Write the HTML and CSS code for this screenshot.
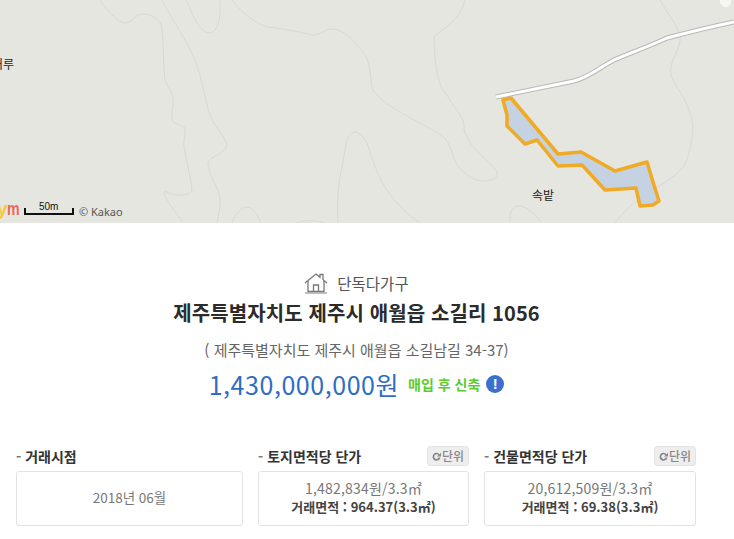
FILE: index.html
```html
<!DOCTYPE html>
<html lang="ko">
<head>
  <meta charset="UTF-8">
  <meta name="viewport" content="width=device-width, initial-scale=1.0">
  <title>실거래가 상세</title>
  <link rel="stylesheet" href="styles.css">
</head>
<body>
  <div class="map">
    <svg class="map-bg" width="734" height="223" viewBox="0 0 734 223">
      <g class="contour">
        <path d="M100 0C108 12 118 23 126 23C133 22 135 14 143 14C150 14 158 18 161 24C164 40 163 65 165 80C168 88 172 92 173 98C174 106 171 113 172 120C175 125 182 125 185 128C186 135 183 140 184 146C186 160 191 178 192 191C188 197 172 196 165 191C163 198 175 210 183 223"/>
        <path d="M162 0C172 20 187 40 195 60C202 78 205 100 210 115C215 128 224 135 227 145C225 155 210 155 208 163C208 175 218 185 220 198C221 208 218 215 217 223"/>
        <path d="M186 0C192 12 199 33 209 33C218 33 221 18 220 0"/>
        <path d="M232 0C243 14 256 24 268 27C285 29 295 31 312 35C322 35 325 29 332 29C345 29 358 45 367 58C372 75 370 85 374 92C385 105 405 115 440 134C450 140 452 155 457 165C465 175 475 182 486 181C495 180 499 176 497 172C490 160 470 150 464 130C466 118 455 110 447 95C436 85 435 60 434 38C438 30 458 25 465 0"/>
        <path d="M338 223C337 205 338 185 341 172C345 155 345 133 355 132C360 132 364 138 367 143C375 165 380 195 420 223"/>
        <path d="M232 223C235 215 241 207 247 207C253 207 258 216 261 223"/>
        <path d="M295 223C305 220 315 220 326 223"/>
        <path d="M660 0C668 15 677 25 680 35C682 50 668 60 671 75C676 90 690 100 693 128C692 145 688 160 683 167C670 185 640 190 615 223"/>
        <path d="M510 223C509 212 512 206 519 206C527 206 536 215 542 223"/>
      </g>
      <path class="road-case" d="M496 97L574 81C590 77 600 67 614 60C630 53 650 46 667 38C690 32 710 27 734 22"/>
      <path class="road" d="M496 97L574 81C590 77 600 67 614 60C630 53 650 46 667 38C690 32 710 27 734 22"/>
      <path class="lot" d="M503 100L511 98L558 154L581 152L615 171L647 162L653 182L659 201L653 205L640 206L636 188L605 190L582 165L558 166L537 140L525 144L507 126L507 115Z"/>
      <path class="marker" d="M720 0H731V3L728 7H724L720 3Z"/>
      <path class="scale" d="M25 208V214H73V208"/>
    </svg>
    <span class="map-label label-west">거루</span>
    <span class="map-label label-field">속밭</span>
    <span class="map-logo"><span class="logo-y">y</span><span class="logo-m">m</span></span>
    <span class="scale-text">50m</span>
    <span class="map-copy">© Kakao</span>
  </div>

  <div class="summary">
    <div class="kind">
      <svg class="kind-icon" width="24" height="22" viewBox="0 0 24 22">
        <path d="M1 11L12 2L16 5.300V2.500H19V7.800L23 11"/>
        <path d="M4 9V19.500H20V9M9.500 19.500V13H14.500V19.500"/>
        <path class="kind-base" d="M1 21H23"/>
      </svg>
      <span>단독다가구</span>
    </div>
    <h1>제주특별자치도 제주시 애월읍 소길리 1056</h1>
    <p class="road-addr">( 제주특별자치도 제주시 애월읍 소길남길 34-37)</p>
    <div class="price-row">
      <span class="price">1,430,000,000원</span>
      <span class="tag">매입 후 신축</span>
      <span class="info-dot">!</span>
    </div>
  </div>

  <div class="cols">
    <div class="col col-date">
      <div class="col-head"><h2>거래시점</h2></div>
      <div class="box"><span>2018년 06월</span></div>
    </div>
    <div class="col col-land">
      <div class="col-head">
        <h2>토지면적당 단가</h2>
        <button class="unit">
          <svg width="11" height="11" viewBox="0 0 11 11"><path d="M8.800 3.500A4 4 0 1 0 9.500 6.500H7.600A2.200 2.200 0 1 1 7.400 4.300L5.800 5.500H10V1.200Z"/></svg>단위
        </button>
      </div>
      <div class="box"><span>1,482,834원/3.3㎡</span><b>거래면적 : 964.37(3.3㎡)</b></div>
    </div>
    <div class="col col-build">
      <div class="col-head">
        <h2>건물면적당 단가</h2>
        <button class="unit">
          <svg width="11" height="11" viewBox="0 0 11 11"><path d="M8.800 3.500A4 4 0 1 0 9.500 6.500H7.600A2.200 2.200 0 1 1 7.400 4.300L5.800 5.500H10V1.200Z"/></svg>단위
        </button>
      </div>
      <div class="box"><span>20,612,509원/3.3㎡</span><b>거래면적 : 69.38(3.3㎡)</b></div>
    </div>
  </div>
</body>
</html>
```

FILE: styles.css
```css
html, body {
  margin: 0;
  height: 539px;
  overflow: hidden;
}
body {
  background: #fff;
  color: #333;
  font-family: "Noto Sans CJK KR", "Noto Sans", sans-serif;
}
h1, h2, p {
  margin: 0;
}

/* map */
.map {
  position: relative;
  height: 223px;
  overflow: hidden;
  background: #e6e6e1;
}
.map-bg {
  display: block;
}
.contour path {
  fill: none;
  stroke: #d9d9d4;
  stroke-width: 1;
}
.road-case {
  fill: none;
  stroke: #b9b9b4;
  stroke-width: 5;
}
.road {
  fill: none;
  stroke: #fff;
  stroke-width: 3;
}
.lot {
  fill: #c5d2e2;
  stroke: #f0aa23;
  stroke-width: 3.500;
  stroke-linejoin: round;
}
.marker {
  fill: #f6f6f3;
}
.scale {
  fill: none;
  stroke: #111;
  stroke-width: 2;
}
.map-label {
  position: absolute;
  font-size: 12px;
  line-height: 14px;
  color: #222;
}
.label-west {
  left: -8px;
  top: 57px;
}
.label-field {
  left: 532px;
  top: 188px;
}
.map-logo {
  position: absolute;
  left: -3px;
  top: 198px;
  font: bold 19px/22px "Liberation Sans", sans-serif;
}
.logo-y {
  color: #f5c842;
}
.logo-m {
  display: inline-block;
  margin-left: -1px;
  transform: scaleX(0.750);
  transform-origin: left;
  color: #ea6a5c;
}
.scale-text {
  position: absolute;
  left: 39px;
  top: 201px;
  font: 10px/12px "Liberation Sans", sans-serif;
  color: #111;
}
.map-copy {
  position: absolute;
  left: 79px;
  top: 205px;
  font: 11px/13px "Noto Sans", sans-serif;
  color: #555;
}

/* summary */
.summary {
  height: 200px;
  box-sizing: border-box;
  padding-top: 48px;
  margin-right: 21px;
  display: flex;
  flex-direction: column;
  align-items: center;
}
.kind {
  display: flex;
  align-items: center;
  gap: 9px;
  height: 24px;
  font-size: 15.500px;
  color: #555;
}
.kind-icon {
  fill: none;
  stroke: #777;
  stroke-width: 1.300;
}
.kind-base {
  stroke: #aaa;
  stroke-width: 1.500;
}
h1 {
  margin-top: 2px;
  font-size: 20px;
  line-height: 32px;
  font-weight: 700;
  letter-spacing: 0.100px;
  color: #2b2b2b;
}
.road-addr {
  margin-top: 11px;
  font-size: 15px;
  line-height: 20px;
  color: #666;
}
.price-row {
  display: flex;
  align-items: center;
  height: 34px;
  margin-top: 7px;
}
.price {
  font-size: 25px;
  font-weight: 400;
  letter-spacing: 0.550px;
  color: #2f6dc4;
}
.tag {
  margin-left: 9px;
  font-size: 14px;
  font-weight: 700;
  color: #5ccb2e;
}
.info-dot {
  width: 18px;
  height: 18px;
  margin-left: 6px;
  border-radius: 50%;
  background: #3c6fd0;
  color: #fff;
  font: bold 15px/18px "Liberation Sans", sans-serif;
  text-align: center;
}

/* bottom columns */
.cols {
  display: flex;
  gap: 15px;
  padding-left: 16px;
  margin-top: 23px;
}
.col-date {
  width: 227px;
}
.col-land {
  width: 211px;
}
.col-build {
  width: 212px;
}
.col-head {
  display: flex;
  justify-content: space-between;
  align-items: center;
  height: 20px;
  margin-bottom: 5px;
}
h2 {
  font-size: 14px;
  line-height: 20px;
  font-weight: 700;
  color: #333;
}
h2::before {
  content: "- ";
  color: #777;
}
.unit {
  display: flex;
  align-items: center;
  gap: 0;
  height: 20px;
  width: 42px;
  padding: 0 0 0 3px;
  border: 1px solid #e4e4e4;
  border-radius: 3px;
  background: #eee;
  color: #888;
  font: 500 12px/18px "Noto Sans CJK KR", sans-serif;
}
.unit svg {
  fill: #888;
}
.box {
  display: flex;
  flex-direction: column;
  justify-content: center;
  align-items: center;
  gap: 1px;
  height: 55px;
  box-sizing: border-box;
  padding-bottom: 3px;
  border: 1px solid #e2e2e2;
  border-radius: 3px;
  color: #777;
}
.box span {
  font-size: 14px;
  letter-spacing: 0.200px;
  line-height: 18px;
  height: 18px;
  overflow: hidden;
}
.col-date .box span {
  font-size: 13.500px;
  letter-spacing: 0;
}
.box b {
  font-size: 13px;
  line-height: 18px;
  height: 18px;
  overflow: hidden;
  color: #444;
}
```
